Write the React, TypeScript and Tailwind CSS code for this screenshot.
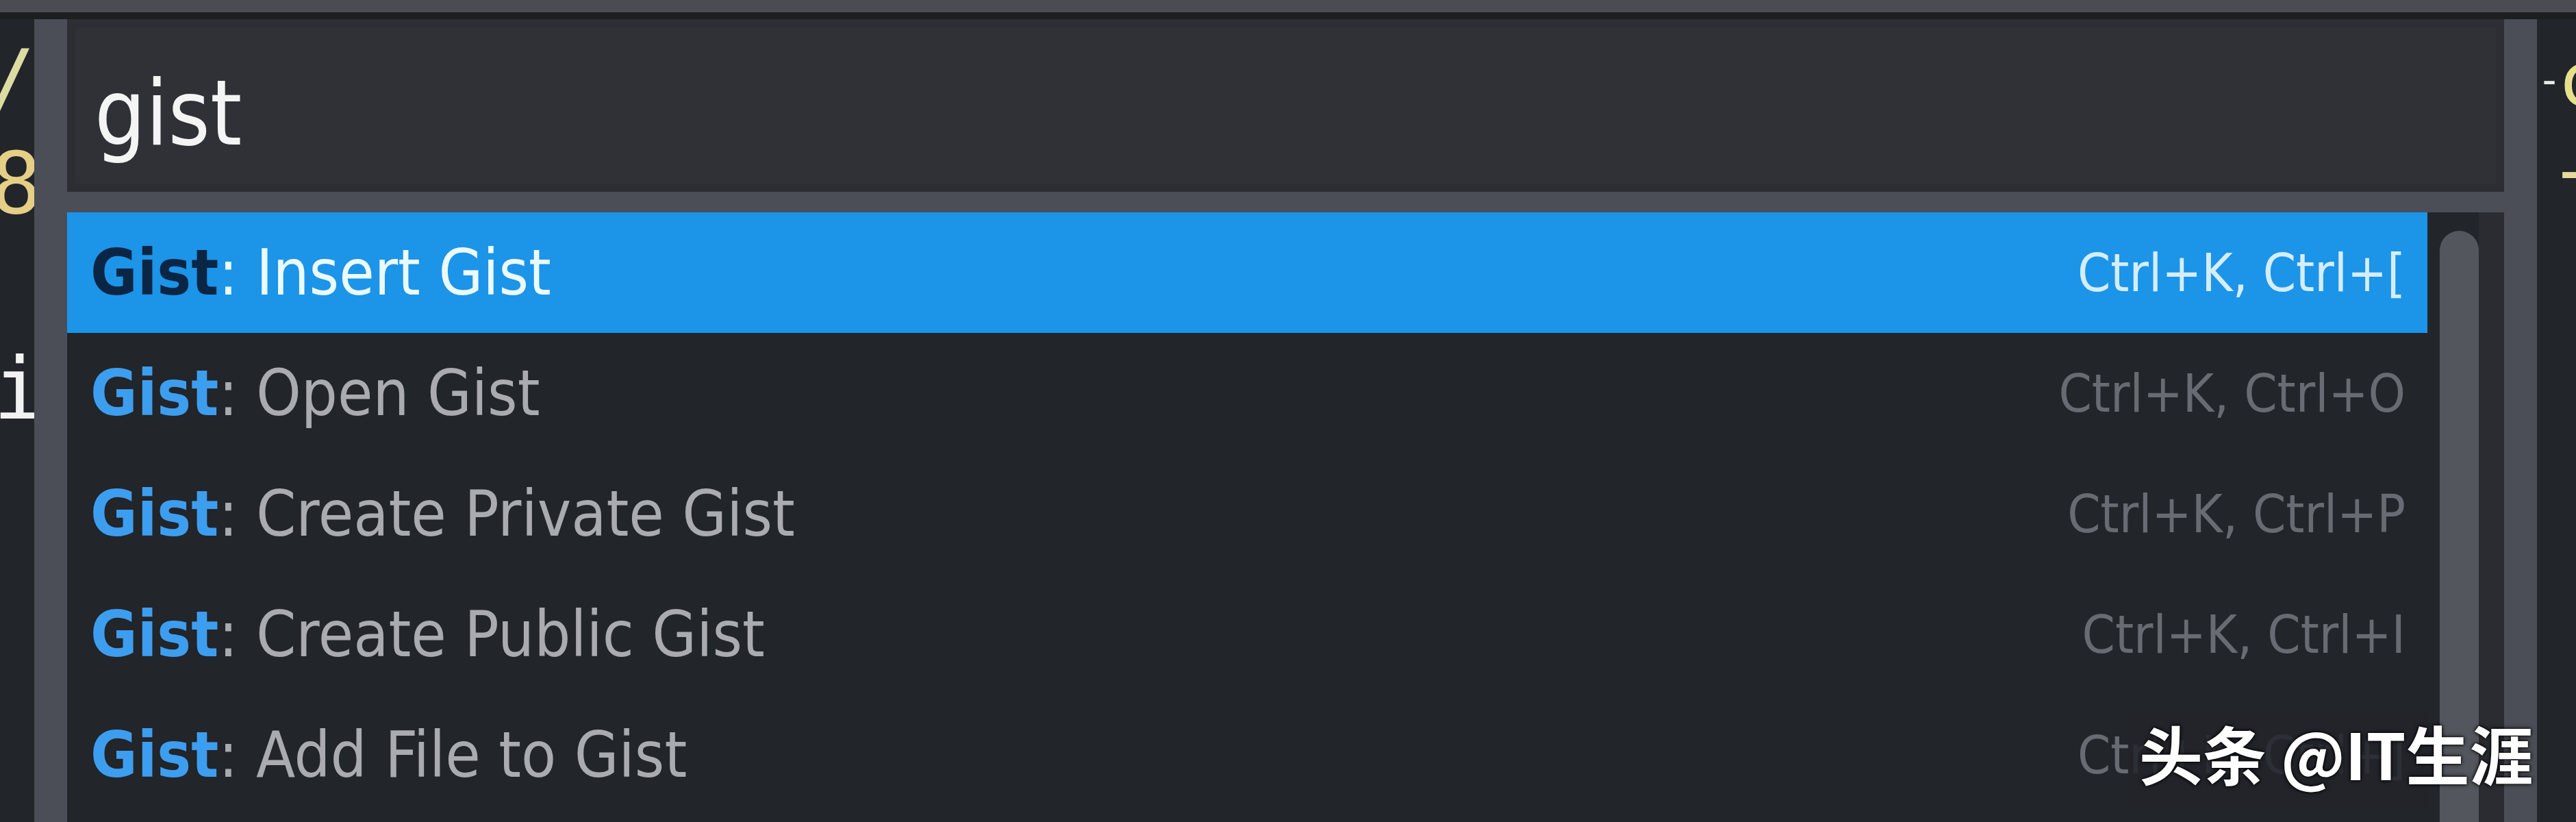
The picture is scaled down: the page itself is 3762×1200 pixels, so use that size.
const rows = [
  { label: 'Insert Gist', keys: 'Ctrl+K, Ctrl+[', active: true },
  { label: 'Open Gist', keys: 'Ctrl+K, Ctrl+O', active: false },
  { label: 'Create Private Gist', keys: 'Ctrl+K, Ctrl+P', active: false },
  { label: 'Create Public Gist', keys: 'Ctrl+K, Ctrl+I', active: false },
  { label: 'Add File to Gist', keys: 'Ctrl+K, Ctrl+]', active: false },
];

function Row({ label, keys, active }: { label: string; keys: string; active: boolean }) {
  return (
    <div
      className={`h-[176px] shrink-0 flex items-center justify-between pl-[34px] pr-[32px] ${
        active ? 'bg-[#1c94e8]' : ''
      }`}
    >
      <div className="text-[93px] leading-none whitespace-nowrap">
        <span className={`font-bold ${active ? 'text-[#0b2645]' : 'text-[#3d9ef0]'}`}>Gist</span>
        <span className={active ? 'text-[#eafaff]' : 'text-[#a9abb0]'}>: {label}</span>
      </div>
      <div className={`text-[77px] leading-none whitespace-nowrap ${active ? 'text-[#d4edfd]' : 'text-[#686b72]'}`}>
        {keys}
      </div>
    </div>
  );
}

export default function App() {
  return (
    <div className="relative w-[3762px] h-[1200px] overflow-hidden bg-[#22252a] flex flex-col font-['DejaVu_Sans_Condensed','DejaVu_Sans',sans-serif]">
      {/* tab bar edge */}
      <div className="h-[18px] shrink-0 bg-[#4a4c51]" />
      <div className="h-[10px] shrink-0 bg-[#1d1e21]" />

      <div className="flex flex-1 min-h-0">
        {/* left editor, clipped */}
        <div className="w-[50px] shrink-0 overflow-hidden flex flex-col pt-[15px] font-['DejaVu_Sans_Mono',monospace] text-[125px] leading-[150px]">
          <div className="-ml-[23px] text-[#dcdca2]">/</div>
          <div className="-ml-[14px] text-[#e5cf86]">8</div>
          <div className="h-[150px]" />
          <div className="-ml-[10px] text-[#f2f2f2]">i</div>
        </div>
        <div className="w-[48px] shrink-0 bg-[#4b4e56]" />

        {/* command palette */}
        <div className="w-[3559px] shrink-0 flex flex-col">
          <div className="h-[252px] shrink-0 bg-[#2f3136] shadow-[inset_0_0_0_12px_#2c2e33] pt-[72px] pl-[40px]">
            <div className="text-[131px] leading-none text-[#f4f4f4]">gist</div>
          </div>
          <div className="h-[30px] shrink-0 bg-[#4b4e56]" />
          <div className="flex-1 min-h-0 flex overflow-hidden">
            <div className="w-[3447px] shrink-0 flex flex-col">
              {rows.map((r) => (
                <Row key={r.label} {...r} />
              ))}
            </div>
            <div className="w-[18px] shrink-0" />
            <div className="w-[57px] shrink-0 mt-[27px] rounded-t-full bg-[#53565c]" />
            <div className="flex-1 bg-[#2a2c31]" />
          </div>
        </div>

        <div className="w-[48px] shrink-0 bg-[#4b4e56]" />
        {/* right editor, clipped */}
        <div className="w-[57px] shrink-0 overflow-hidden flex flex-col pt-[22px] font-['DejaVu_Sans_Mono',monospace] text-[110px] leading-[132px]">
          <div className="flex items-center whitespace-nowrap">
            <span className="w-[30px] shrink-0 text-[60px] text-[#e8e8e8]">-</span>
            <span className="text-[#e6e08a]">c</span>
          </div>
          <div className="pl-[18px] text-[#e6d99a]">-</div>
        </div>
      </div>

      {/* watermark */}
      <div className="absolute left-[3108px] top-[1040px] h-[140px] w-[440px] bg-[#22252a]/85" />
      <div className="absolute left-[3124px] top-[1052px] text-[93px] leading-none font-bold text-white font-['Noto_Sans_CJK_SC',sans-serif] [text-shadow:0_0_6px_#000,0_0_3px_#000]">
        头条 @IT生涯
      </div>
    </div>
  );
}
